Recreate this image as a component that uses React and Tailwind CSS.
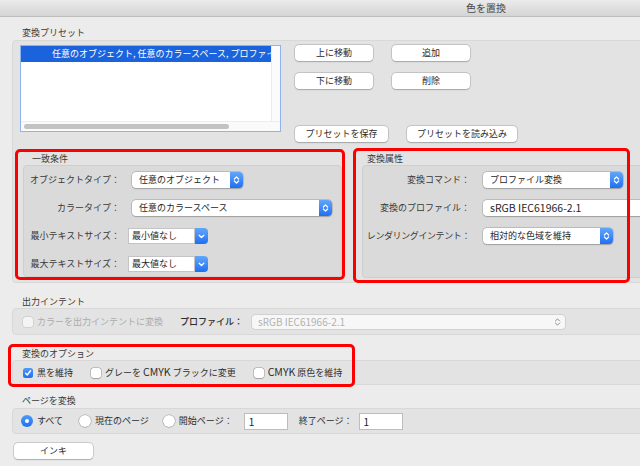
import React from "react";

function Stepper() {
  return (
    <svg width="7" height="10" viewBox="0 0 7 10" fill="none">
      <path d="M1.4 4 L3.5 1.9 L5.6 4" stroke="white" strokeWidth="1.2" strokeLinecap="round" strokeLinejoin="round" />
      <path d="M1.4 6 L3.5 8.1 L5.6 6" stroke="white" strokeWidth="1.2" strokeLinecap="round" strokeLinejoin="round" />
    </svg>
  );
}

function Chevron() {
  return (
    <svg width="7" height="5" viewBox="0 0 7 5" fill="none">
      <path d="M1.2 1.2 L3.5 3.5 L5.8 1.2" stroke="white" strokeWidth="1.3" strokeLinecap="round" strokeLinejoin="round" />
    </svg>
  );
}

function Popup({ className, children, stepper = true }) {
  return (
    <div className={`flex h-[16px] items-stretch rounded-[4px] bg-white shadow-[0_0_0_0.5px_rgba(0,0,0,0.22),0_0.5px_1.5px_rgba(0,0,0,0.18)] ${className}`}>
      <span className="flex-1 overflow-hidden whitespace-nowrap pl-[7px] leading-[16px] text-[#262626]">{children}</span>
      {stepper && (
        <span className="flex w-[13px] items-center justify-center rounded-r-[4px] bg-gradient-to-b from-[#62a6fa] to-[#1d6ff2]">
          <Stepper />
        </span>
      )}
    </div>
  );
}

function Combo({ children }) {
  return (
    <div className="flex h-[16px] w-[80px] items-stretch">
      <span className="flex-1 border border-[#c4c4c4] bg-white pl-[3px] leading-[14px] text-[#262626]">{children}</span>
      <span className="flex w-[13px] items-center justify-center rounded-r-[4px] bg-gradient-to-b from-[#62a6fa] to-[#1d6ff2]">
        <Chevron />
      </span>
    </div>
  );
}

function Btn({ className, children }) {
  return (
    <div className={`flex h-[16px] items-center justify-center rounded-[4px] bg-white text-[#2a2a2a] shadow-[0_0_0_0.5px_rgba(0,0,0,0.22),0_0.5px_1.5px_rgba(0,0,0,0.18)] ${className}`}>
      {children}
    </div>
  );
}

function Check({ checked, disabled }) {
  if (checked) {
    return (
      <span className="flex h-[10px] w-[10px] items-center justify-center rounded-[2.5px] bg-gradient-to-b from-[#4f9bf8] to-[#1f6ff1]">
        <svg width="8" height="8" viewBox="0 0 8 8" fill="none">
          <path d="M1.6 4.3 L3.2 6 L6.5 1.8" stroke="white" strokeWidth="1.4" strokeLinecap="round" strokeLinejoin="round" />
        </svg>
      </span>
    );
  }
  return (
    <span
      className={`block h-[10px] w-[10px] rounded-[2.5px] ${
        disabled
          ? "bg-[#f4f4f4] shadow-[0_0_0_0.5px_rgba(0,0,0,0.14)]"
          : "bg-white shadow-[0_0_0_0.5px_rgba(0,0,0,0.3),0_0.5px_1px_rgba(0,0,0,0.15)]"
      }`}
    />
  );
}

function Radio({ on }) {
  if (on) {
    return (
      <span className="flex h-[12px] w-[12px] items-center justify-center rounded-full bg-gradient-to-b from-[#4f9bf8] to-[#1f6ff1]">
        <span className="h-[4px] w-[4px] rounded-full bg-white" />
      </span>
    );
  }
  return <span className="block h-[12px] w-[12px] rounded-full bg-white shadow-[0_0_0_0.5px_rgba(0,0,0,0.3),0_0.5px_1px_rgba(0,0,0,0.15)]" />;
}

function Field() {
  return (
    <div className="h-[17px] w-[44px] border border-[#bdbdbd] bg-white pl-[4px] text-[10px] leading-[15px] text-[#222]">1</div>
  );
}

export default function App() {
  return (
    <div className="relative h-[466px] w-[640px] overflow-hidden bg-[#ececec] font-['Noto_Sans_CJK_JP',sans-serif] text-[9px] leading-[12px] text-[#383838]">
      <div className="w-[972px]">
        <div className="flex h-[17px] items-center justify-center border-b border-[#bdbdbd] bg-gradient-to-b from-[#ebebeb] to-[#d4d4d4] text-[10px] text-[#4a4a4a]">
          色を置換
        </div>

        <div className="pl-[12px]">
          <div className="mt-[10px] pl-[10px]">変換プリセット</div>
          <div className="mt-[1px] h-[243px] rounded-[4px] border border-[#d8d8d8] bg-[#e3e3e3]">
            <div className="flex pl-[7px] pt-[4px]">
              <div className="flex h-[87px] w-[261px] flex-col border border-[#8db4ec] bg-white">
                <div className="flex flex-1">
                  <div className="flex-1 overflow-hidden">
                    <div className="h-[16px] overflow-hidden whitespace-nowrap bg-[#1b63dc] pl-[31px] leading-[16px] text-white">
                      任意のオブジェクト, 任意のカラースペース, プロファイル変換
                    </div>
                  </div>
                  <div className="w-[9px] border-l border-[#ececec] bg-[#fbfbfb]" />
                </div>
                <div className="flex h-[10px] items-center border-t border-[#ececec] bg-[#fafafa] pl-[3px]">
                  <div className="h-[5px] w-[205px] rounded-full bg-[#c2c2c2]" />
                </div>
              </div>
              <div className="ml-[14px] flex flex-col">
                <div className="flex gap-[19px]">
                  <Btn className="w-[78px]">上に移動</Btn>
                  <Btn className="w-[78px]">追加</Btn>
                </div>
                <div className="mt-[12px] flex gap-[19px]">
                  <Btn className="w-[78px]">下に移動</Btn>
                  <Btn className="w-[78px]">削除</Btn>
                </div>
                <div className="mt-[37px] flex gap-[19px]">
                  <Btn className="w-[93px]">プリセットを保存</Btn>
                  <Btn className="w-[110px]">プリセットを読み込み</Btn>
                </div>
              </div>
            </div>

            <div className="mt-[11px] flex">
              <div className="ml-[10px]">
                <div className="pl-[9px]">一致条件</div>
                <div className="flex h-[112px] w-[319px] flex-col gap-[12px] rounded-[4px] border border-[#cecece] bg-[#dadada] pt-[6px]">
                  <div className="flex h-[16px] items-center">
                    <span className="w-[96px] text-right">オブジェクトタイプ：</span>
                    <Popup className="ml-[12px] w-[111px]">任意のオブジェクト</Popup>
                  </div>
                  <div className="flex h-[16px] items-center">
                    <span className="w-[96px] text-right">カラータイプ：</span>
                    <Popup className="ml-[12px] w-[200px]">任意のカラースペース</Popup>
                  </div>
                  <div className="flex h-[16px] items-center">
                    <span className="w-[96px] text-right">最小テキストサイズ：</span>
                    <span className="ml-[8px]"><Combo>最小値なし</Combo></span>
                  </div>
                  <div className="flex h-[16px] items-center">
                    <span className="w-[96px] text-right">最大テキストサイズ：</span>
                    <span className="ml-[8px]"><Combo>最大値なし</Combo></span>
                  </div>
                </div>
              </div>

              <div className="ml-[20px]">
                <div className="pl-[5px]">変換属性</div>
                <div className="flex h-[113px] w-[600px] flex-col gap-[12px] rounded-[4px] border border-[#cecece] bg-[#dadada] pt-[6px]">
                  <div className="flex h-[16px] items-center">
                    <span className="flex w-[107px] justify-end whitespace-nowrap">変換コマンド：</span>
                    <Popup className="ml-[13px] w-[140px]">プロファイル変換</Popup>
                  </div>
                  <div className="flex h-[16px] items-center">
                    <span className="flex w-[107px] justify-end whitespace-nowrap">変換のプロファイル：</span>
                    <Popup className="ml-[13px] w-[220px] text-[10.5px]">sRGB IEC61966-2.1</Popup>
                  </div>
                  <div className="flex h-[16px] items-center">
                    <span className="flex w-[107px] justify-end whitespace-nowrap tracking-[-0.4px]">レンダリングインテント：</span>
                    <Popup className="ml-[13px] w-[130px]">相対的な色域を維持</Popup>
                  </div>
                </div>
              </div>
            </div>
          </div>

          <div className="mt-[13px] pl-[10px]">出力インテント</div>
          <div className="flex h-[27px] items-center rounded-[4px] border border-[#d8d8d8] bg-[#e3e3e3]">
            <span className="ml-[10px]"><Check disabled /></span>
            <span className="ml-[4px] text-[#ababab]">カラーを出力インテントに変換</span>
            <span className="ml-[17px] font-medium text-[#2e2e2e]">プロファイル：</span>
            <div className="ml-[9px] flex h-[14px] w-[313px] items-center justify-between rounded-[3px] bg-[#f7f7f7] pl-[6px] pr-[4px] text-[10px] text-[#b2b2b2] shadow-[0_0_0_0.5px_rgba(0,0,0,0.16)]">
              <span>sRGB IEC61966-2.1</span>
              <svg width="7" height="10" viewBox="0 0 7 10" fill="none">
                <path d="M1.4 4 L3.5 1.9 L5.6 4" stroke="#8a8a8a" strokeWidth="1" strokeLinecap="round" strokeLinejoin="round" />
                <path d="M1.4 6 L3.5 8.1 L5.6 6" stroke="#8a8a8a" strokeWidth="1" strokeLinecap="round" strokeLinejoin="round" />
              </svg>
            </div>
          </div>

          <div className="mt-[13px] pl-[10px]">変換のオプション</div>
          <div className="flex h-[25px] items-center rounded-[4px] border border-[#d8d8d8] bg-[#e3e3e3]">
            <span className="ml-[10px]"><Check checked /></span>
            <span className="ml-[4px] text-[#2e2e2e]">黒を維持</span>
            <span className="ml-[18px]"><Check /></span>
            <span className="ml-[4px] text-[#2e2e2e]">グレーを <span className="text-[10.5px]">CMYK</span> ブラックに変更</span>
            <span className="ml-[18px]"><Check /></span>
            <span className="ml-[4px] text-[#2e2e2e]"><span className="text-[10.5px]">CMYK</span> 原色を維持</span>
          </div>

          <div className="mt-[10px] pl-[10px]">ページを変換</div>
          <div className="mt-[1px] flex h-[26px] items-center rounded-[4px] border border-[#d8d8d8] bg-[#e3e3e3]">
            <span className="ml-[8px]"><Radio on /></span>
            <span className="ml-[4px] text-[#2e2e2e]">すべて</span>
            <span className="ml-[16px]"><Radio /></span>
            <span className="ml-[4px] text-[#2e2e2e]">現在のページ</span>
            <span className="ml-[14px]"><Radio /></span>
            <span className="ml-[4px] text-[#2e2e2e]">開始ページ：</span>
            <span className="ml-[11px]"><Field /></span>
            <span className="ml-[11px] text-[#2e2e2e]">終了ページ：</span>
            <span className="ml-[6px]"><Field /></span>
          </div>

          <Btn className="ml-[2px] mt-[9px] w-[79px]">インキ</Btn>
        </div>
      </div>

      <div className="pointer-events-none absolute left-[15px] top-[149px] h-[131px] w-[330px] rounded-[5px] border-[3px] border-[#fb0000]" />
      <div className="pointer-events-none absolute left-[353px] top-[148px] h-[135px] w-[277px] rounded-[5px] border-[3px] border-[#fb0000]" />
      <div className="pointer-events-none absolute left-[8px] top-[344px] h-[43px] w-[347px] rounded-[5px] border-[3px] border-[#fb0000]" />
    </div>
  );
}
